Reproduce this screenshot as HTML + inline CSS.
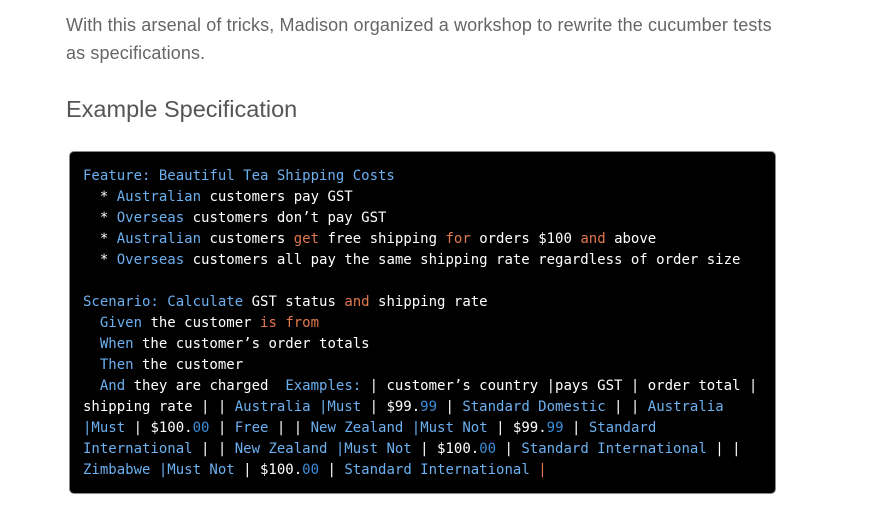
<!DOCTYPE html>
<html><head><meta charset="utf-8"><style>
body{margin:0;background:#fff;width:880px;height:518px;overflow:hidden;font-family:"Liberation Sans",sans-serif}
p{position:absolute;left:66px;top:11px;margin:0;font-size:18px;letter-spacing:0.12px;line-height:28px;color:#666;width:735px}
h2{position:absolute;left:66px;top:96px;margin:0;font-weight:normal;font-size:23.5px;color:#555}
pre{position:absolute;left:69px;top:151px;width:707px;height:343px;box-sizing:border-box;margin:0;background:#000;border:1px solid #888;border-radius:5px;padding:14px 0 0 13px;font-family:"DejaVu Sans Mono",monospace;font-size:14px;line-height:21px;color:#fff;white-space:pre}
.b{color:#6cb0f0}.o{color:#e0784f}.d{color:#3c8ed8}
</style></head><body>
<p>With this arsenal of tricks, Madison organized a workshop to rewrite the cucumber tests<br>as specifications.</p>
<h2>Example Specification</h2>
<pre><span class="b">Feature: Beautiful Tea Shipping Costs</span>
  * <span class="b">Australian</span> customers pay GST
  * <span class="b">Overseas</span> customers don’t pay GST
  * <span class="b">Australian</span> customers <span class="o">get</span> free shipping <span class="o">for</span> orders $100 <span class="o">and</span> above
  * <span class="b">Overseas</span> customers all pay the same shipping rate regardless of order size

<span class="b">Scenario: Calculate</span> GST status <span class="o">and</span> shipping rate
  <span class="b">Given</span> the customer <span class="o">is from</span>
  <span class="b">When</span> the customer’s order totals
  <span class="b">Then</span> the customer
  <span class="b">And</span> they are charged  <span class="b">Examples:</span> | customer’s country |pays GST | order total |
shipping rate | | <span class="b">Australia |Must</span> | $99.<span class="d">99</span> | <span class="b">Standard Domestic</span> | | <span class="b">Australia</span>
<span class="b">|Must</span> | $100.<span class="d">00</span> | <span class="b">Free</span> | | <span class="b">New Zealand |Must Not</span> | $99.<span class="d">99</span> | <span class="b">Standard</span>
<span class="b">International</span> | | <span class="b">New Zealand |Must Not</span> | $100.<span class="d">00</span> | <span class="b">Standard International</span> | |
<span class="b">Zimbabwe |Must Not</span> | $100.<span class="d">00</span> | <span class="b">Standard International</span> <span class="o">|</span></pre>
</body></html>
